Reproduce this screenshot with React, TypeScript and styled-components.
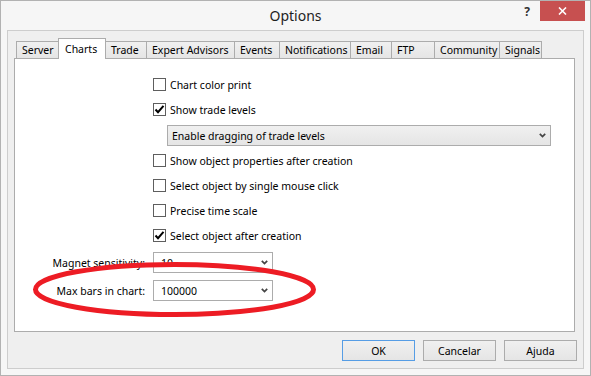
import * as React from 'react';
import styled, { createGlobalStyle } from 'styled-components';

const GlobalStyle = createGlobalStyle`
  html, body {
    margin: 0;
    padding: 0;
    background: #ffffff;
  }
  body {
    font-family: 'Noto Sans', 'Open Sans', sans-serif;
    font-size: 10.5px;
    color: #000000;
  }
`;

const Window = styled.div`
  width: 591px;
  height: 376px;
  box-sizing: border-box;
  border: 1px solid #b2b2b2;
  background: #f6f6f6;
  display: flex;
  flex-direction: column;
`;

const TitleBar = styled.div`
  height: 29px;
  flex: none;
  display: grid;
  grid-template-columns: 1fr auto 1fr;
  align-items: start;
`;

const Title = styled.div`
  grid-column: 2;
  font-size: 14px;
  line-height: 29px;
  color: #1e1e1e;
`;

const TitleButtons = styled.div`
  grid-column: 3;
  display: flex;
  justify-content: flex-end;
  align-items: flex-start;
`;

const HelpButton = styled.div`
  font-size: 12px;
  font-weight: bold;
  line-height: 14px;
  padding-top: 4px;
  margin-right: 10px;
  color: #333333;
`;

const CloseButton = styled.div`
  width: 45px;
  height: 20px;
  margin-right: 5px;
  background: #c75050;
  display: flex;
  align-items: center;
  justify-content: center;
`;

const Client = styled.div`
  flex: 1;
  margin: 0 6px 6px;
  border: 1px solid #cdcdcd;
  background: #efefef;
  display: flex;
  flex-direction: column;
  padding: 7px 6px 7px 6px;
`;

const TabRow = styled.div`
  height: 21px;
  margin-bottom: -1px;
  padding-left: 2px;
  display: flex;
  align-items: flex-end;
  position: relative;
  z-index: 1;
`;

const Tab = styled.div<{ $active?: boolean; $width: number }>`
  position: relative;
  box-sizing: border-box;
  width: ${p => p.$width}px;
  height: ${p => (p.$active ? 21 : 17)}px;
  margin-bottom: ${p => (p.$active ? 0 : 1)}px;
  z-index: ${p => (p.$active ? 2 : 1)};
  & + & {
    margin-left: -1px;
  }
  border: 1px solid #acacac;
  border-bottom: none;
  background: ${p =>
    p.$active ? '#ffffff' : 'linear-gradient(#f0f0f0, #e5e5e5)'};
  padding: ${p => (p.$active ? '2px 0 0 6px' : '0 0 0 5px')};
  line-height: 16px;
  text-align: left;
  white-space: nowrap;
`;

const Panel = styled.div`
  flex: 1;
  position: relative;
  margin-right: 2px;
  background: #ffffff;
  border: 1px solid #acacac;
  padding-top: 13px;
  display: flex;
  flex-direction: column;
`;

const OptionList = styled.div`
  display: flex;
  flex-direction: column;
  padding-left: 138px;
`;

const CheckRow = styled.label`
  height: 25px;
  display: flex;
  align-items: center;
  gap: 4px;
  white-space: nowrap;
`;

const Box = styled.span`
  width: 13px;
  height: 13px;
  box-sizing: border-box;
  border: 1px solid #5e5e5e;
  background: #ffffff;
  display: flex;
  align-items: center;
  justify-content: center;
`;

const DropButton = styled.div`
  height: 21px;
  box-sizing: border-box;
  margin: 3px 23px 2px 14px;
  border: 1px solid #acacac;
  background: linear-gradient(#f0f0f0, #e5e5e5);
  display: flex;
  align-items: center;
  justify-content: space-between;
  padding: 0 4px 0 4px;
`;

const FieldGrid = styled.div`
  margin-top: 4px;
  display: grid;
  grid-template-columns: 130px 120px;
  column-gap: 8px;
  row-gap: 7px;
  align-items: center;
`;

const FieldLabel = styled.div`
  text-align: right;
  white-space: nowrap;
`;

const Combo = styled.div`
  height: 21px;
  box-sizing: border-box;
  border: 1px solid #acacac;
  background: #ffffff;
  display: flex;
  align-items: center;
  justify-content: space-between;
  padding: 0 4px 0 7px;
`;

const Highlight = styled.svg`
  position: absolute;
  left: 0;
  top: 0;
  width: 100%;
  height: 100%;
  pointer-events: none;
  overflow: visible;
`;

const ButtonRow = styled.div`
  margin-top: 8px;
  display: flex;
  justify-content: flex-end;
  gap: 8px;
`;

const DialogButton = styled.div<{ $default?: boolean }>`
  width: 73px;
  height: 21px;
  box-sizing: border-box;
  border: 1px solid ${p => (p.$default ? '#569de5' : '#acacac')};
  background: linear-gradient(#f0f0f0, #e5e5e5);
  display: flex;
  align-items: center;
  justify-content: center;
`;

function Chevron() {
  return (
    <svg width="7" height="5" viewBox="0 0 7 5">
      <polyline points="0.8,0.8 3.5,3.6 6.2,0.8" fill="none" stroke="#444" strokeWidth="1.7" />
    </svg>
  );
}

function Check({ checked, children }: { checked?: boolean; children: React.ReactNode }) {
  return (
    <CheckRow>
      <Box>
        {checked && (
          <svg width="11" height="11" viewBox="0 0 11 11">
            <polyline points="1.5,5.5 4,8.2 9.5,1.8" fill="none" stroke="#000" strokeWidth="2" />
          </svg>
        )}
      </Box>
      {children}
    </CheckRow>
  );
}

const tabs: [string, number][] = [
  ['Server', 43],
  ['Charts', 48],
  ['Trade', 42],
  ['Expert Advisors', 89],
  ['Events', 46],
  ['Notifications', 72],
  ['Email', 42],
  ['FTP', 44],
  ['Community', 66],
  ['Signals', 43],
];

export default function App() {
  return (
    <>
      <GlobalStyle />
      <Window>
        <TitleBar>
          <Title>Options</Title>
          <TitleButtons>
            <HelpButton>?</HelpButton>
            <CloseButton>
              <svg width="9" height="8" viewBox="0 0 9 8">
                <path d="M1 0.5 L8 7.5 M8 0.5 L1 7.5" stroke="#fff" strokeWidth="1.6" />
              </svg>
            </CloseButton>
          </TitleButtons>
        </TitleBar>
        <Client>
          <TabRow>
            {tabs.map(([name, w]) => (
              <Tab key={name} $width={w} $active={name === 'Charts'}>
                {name}
              </Tab>
            ))}
          </TabRow>
          <Panel>
            <OptionList>
              <Check>Chart color print</Check>
              <Check checked>Show trade levels</Check>
              <DropButton>
                <span>Enable dragging of trade levels</span>
                <Chevron />
              </DropButton>
              <Check>Show object properties after creation</Check>
              <Check>Select object by single mouse click</Check>
              <Check>Precise time scale</Check>
              <Check checked>Select object after creation</Check>
            </OptionList>
            <FieldGrid>
              <FieldLabel>Magnet sensitivity:</FieldLabel>
              <Combo>
                <span>10</span>
                <Chevron />
              </Combo>
              <FieldLabel>Max bars in chart:</FieldLabel>
              <Combo>
                <span>100000</span>
                <Chevron />
              </Combo>
            </FieldGrid>
            <Highlight>
              <ellipse cx="159.5" cy="230.5" rx="139" ry="25" fill="none" stroke="#ed1c24" strokeWidth="5" />
            </Highlight>
          </Panel>
          <ButtonRow>
            <DialogButton $default>OK</DialogButton>
            <DialogButton>Cancelar</DialogButton>
            <DialogButton>Ajuda</DialogButton>
          </ButtonRow>
        </Client>
      </Window>
    </>
  );
}
